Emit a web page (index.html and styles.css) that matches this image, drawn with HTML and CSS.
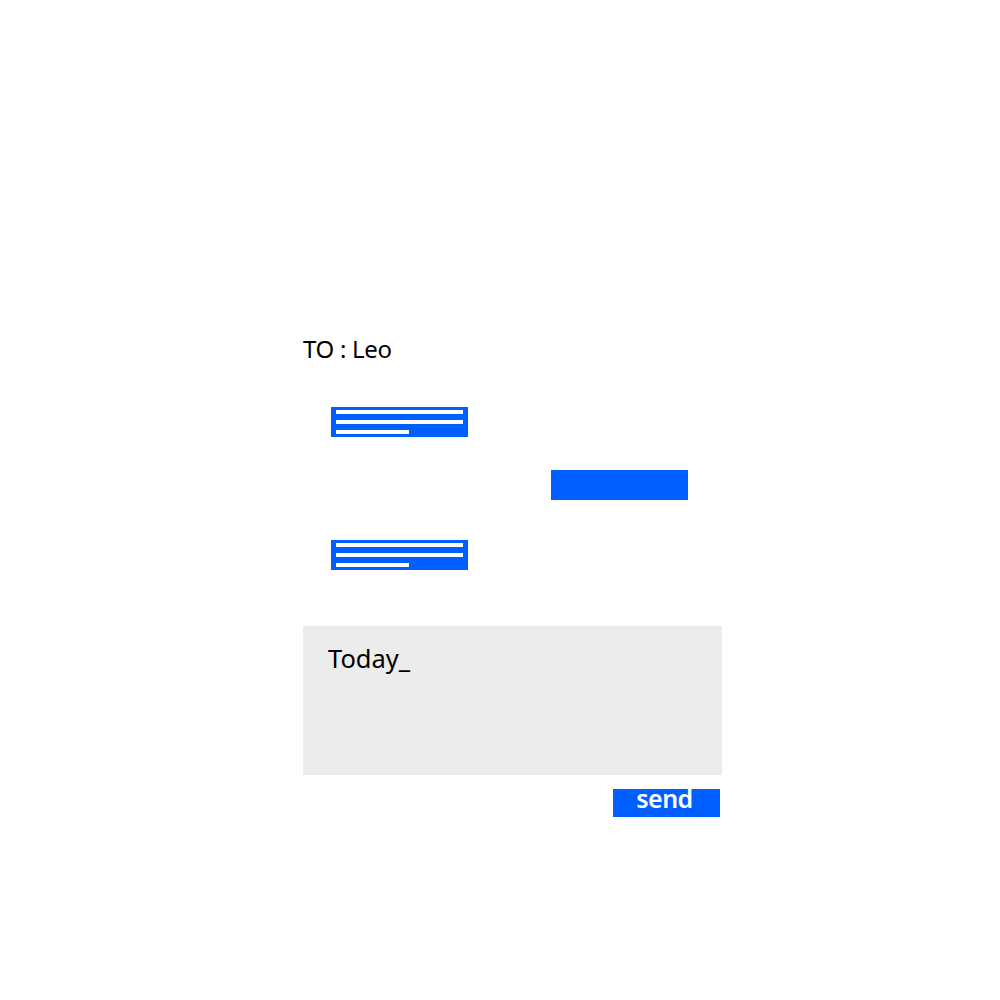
FILE: index.html
```html
<!DOCTYPE html>
<html>
<head>
<meta charset="utf-8">
<link rel="stylesheet" href="styles.css">
</head>
<body>
<div class="chat">
  <div class="to">TO : Leo</div>
  <div class="messages">
    <div class="bubble received">
      <span class="line"></span>
      <span class="line"></span>
      <span class="line short"></span>
    </div>
    <div class="bubble sent"></div>
    <div class="bubble received third">
      <span class="line"></span>
      <span class="line"></span>
      <span class="line short"></span>
    </div>
  </div>
  <div class="composer">Today_</div>
  <div class="actions"><button class="send">send</button></div>
</div>
</body>
</html>
```
FILE: styles.css
```css
html, body {
  margin: 0;
  padding: 0;
  background: #ffffff;
}
body {
  font-family: "Noto Sans", "Open Sans", sans-serif;
  color: #000;
}
.chat {
  width: 419px;
  margin-left: 303px;
  padding-top: 334px;
  display: flex;
  flex-direction: column;
}
.to {
  font-size: 24px;
  line-height: 30px;
  height: 30px;
  letter-spacing: -0.3px;
}
.messages {
  display: flex;
  flex-direction: column;
  margin-top: 43px;
}
.bubble {
  width: 137px;
  height: 30px;
  box-sizing: border-box;
  background: #005fff;
  padding: 3px 5px;
  display: flex;
  flex-direction: column;
  gap: 6px;
}
.received {
  margin-left: 28px;
}
.sent {
  margin-left: 248px;
  margin-top: 33px;
}
.third {
  margin-top: 40px;
}
.line {
  display: block;
  height: 4px;
  width: 127px;
  background: #ffffff;
}
.line.short {
  width: 73px;
}
.composer {
  margin-top: 56px;
  height: 149px;
  box-sizing: border-box;
  background: #ececec;
  padding: 17px 25px;
  font-size: 25.5px;
  line-height: 30px;
}
.actions {
  display: flex;
  justify-content: flex-end;
  margin-top: 14px;
  padding-right: 2px;
}
.send {
  width: 107px;
  height: 28px;
  border: 0;
  margin: 0;
  padding: 0;
  background: #005fff;
  color: #ffffff;
  font-family: "Noto Sans", "Open Sans", sans-serif;
  font-size: 25px;
  font-weight: 600;
  letter-spacing: -0.5px;
  line-height: 16px;
  display: flex;
  align-items: flex-start;
  justify-content: center;
  padding-top: 1px;
  padding-right: 4px;
}
```
